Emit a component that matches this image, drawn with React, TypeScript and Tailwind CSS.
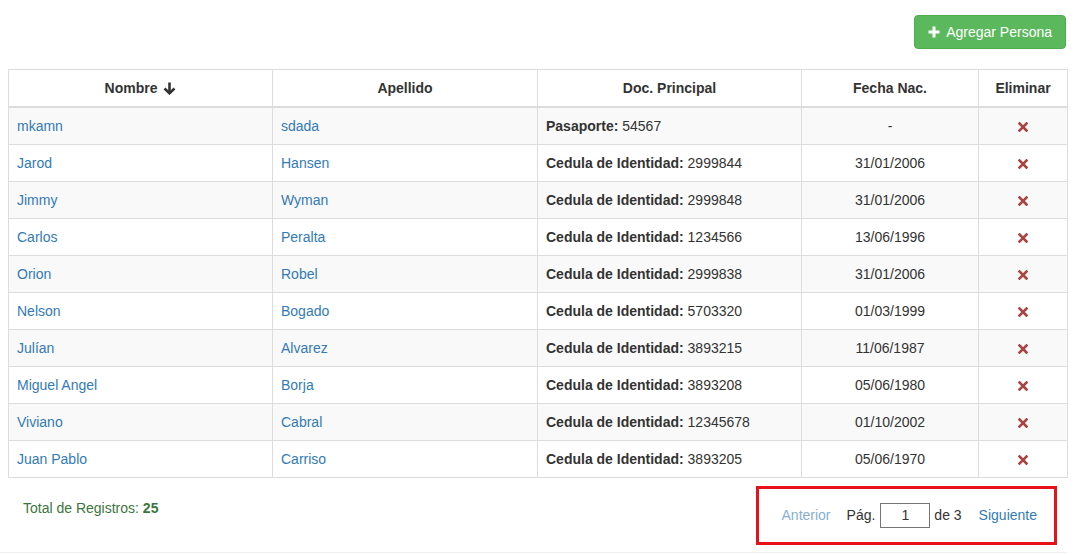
import React from "react";

const rows = [
  { nombre: "mkamn", apellido: "sdada", doc: "Pasaporte:", num: "54567", fecha: "-" },
  { nombre: "Jarod", apellido: "Hansen", doc: "Cedula de Identidad:", num: "2999844", fecha: "31/01/2006" },
  { nombre: "Jimmy", apellido: "Wyman", doc: "Cedula de Identidad:", num: "2999848", fecha: "31/01/2006" },
  { nombre: "Carlos", apellido: "Peralta", doc: "Cedula de Identidad:", num: "1234566", fecha: "13/06/1996" },
  { nombre: "Orion", apellido: "Robel", doc: "Cedula de Identidad:", num: "2999838", fecha: "31/01/2006" },
  { nombre: "Nelson", apellido: "Bogado", doc: "Cedula de Identidad:", num: "5703320", fecha: "01/03/1999" },
  { nombre: "Julían", apellido: "Alvarez", doc: "Cedula de Identidad:", num: "3893215", fecha: "11/06/1987" },
  { nombre: "Miguel Angel", apellido: "Borja", doc: "Cedula de Identidad:", num: "3893208", fecha: "05/06/1980" },
  { nombre: "Viviano", apellido: "Cabral", doc: "Cedula de Identidad:", num: "12345678", fecha: "01/10/2002" },
  { nombre: "Juan Pablo", apellido: "Carriso", doc: "Cedula de Identidad:", num: "3893205", fecha: "05/06/1970" },
];

function PlusIcon() {
  return (
    <svg width="12" height="12" viewBox="0 0 12 12" fill="#fff">
      <rect x="4.5" y="0.5" width="3" height="11" />
      <rect x="0.5" y="4.5" width="11" height="3" />
    </svg>
  );
}

function ArrowDownIcon() {
  return (
    <svg width="13" height="13" viewBox="0 0 13 13" fill="none" stroke="#333" strokeWidth="2.6" strokeLinecap="butt" strokeLinejoin="miter">
      <path d="M6.5 0.5 V11" />
      <path d="M1.5 6.5 L6.5 11.3 L11.5 6.5" />
    </svg>
  );
}

function RemoveIcon() {
  return (
    <svg width="10" height="10" viewBox="0 0 10 10" stroke="#a94442" strokeWidth="2.6" strokeLinecap="square">
      <path d="M1.5 1.5 L8.5 8.5 M8.5 1.5 L1.5 8.5" />
    </svg>
  );
}

export default function App() {
  return (
    <div className="w-[1079px] h-[555px] bg-white text-[14px] text-[#333] overflow-hidden" style={{ fontFamily: '"Liberation Sans", Arial, sans-serif' }}>
      <div className="w-[1067px] pl-2 pt-[15px]">
        <div className="flex justify-end">
          <button className="flex items-center gap-[6px] h-[34px] px-[13px] rounded-[4px] bg-[#5cb85c] border border-[#4cae4c] text-white text-[14px] leading-[20px] mr-px">
            <PlusIcon />
            Agregar Persona
          </button>
        </div>

        <table className="mt-5 w-[1059px] border-collapse border border-[#ddd] table-fixed">
          <colgroup>
            <col className="w-[264px]" />
            <col className="w-[265px]" />
            <col className="w-[264px]" />
            <col className="w-[177px]" />
            <col className="w-[89px]" />
          </colgroup>
          <thead>
            <tr>
              <th className="border border-[#ddd] border-b-2 p-2 leading-[20px] font-bold text-center">
                <span className="inline-flex items-center gap-[6px]">Nombre <ArrowDownIcon /></span>
              </th>
              <th className="border border-[#ddd] border-b-2 p-2 leading-[20px] font-bold text-center">Apellido</th>
              <th className="border border-[#ddd] border-b-2 p-2 leading-[20px] font-bold text-center">Doc. Principal</th>
              <th className="border border-[#ddd] border-b-2 p-2 leading-[20px] font-bold text-center">Fecha Nac.</th>
              <th className="border border-[#ddd] border-b-2 p-2 leading-[20px] font-bold text-center">Eliminar</th>
            </tr>
          </thead>
          <tbody>
            {rows.map((r, i) => (
              <tr key={i} className={i % 2 === 0 ? "bg-[#f9f9f9]" : "bg-white"}>
                <td className="border border-[#ddd] p-2 leading-[20px] text-[#337ab7]">{r.nombre}</td>
                <td className="border border-[#ddd] p-2 leading-[20px] text-[#337ab7]">{r.apellido}</td>
                <td className="border border-[#ddd] p-2 leading-[20px]">
                  <b>{r.doc}</b> {r.num}
                </td>
                <td className="border border-[#ddd] p-2 leading-[20px] text-center">{r.fecha}</td>
                <td className="border border-[#ddd] p-2 leading-[20px] text-center">
                  <span className="inline-flex align-middle"><RemoveIcon /></span>
                </td>
              </tr>
            ))}
          </tbody>
        </table>

        <div className="flex justify-between items-start mt-[8px]">
          <div className="pl-[15px] pt-[12px] leading-[20px] text-[#3c763d]">
            Total de Registros: <b className="text-[#3c763d]">25</b>
          </div>
          <div className="w-[301px] h-[59px] border-[3px] border-[#e8111b] flex items-center justify-end pr-[17px] mr-[10px]">
            <span className="text-[#337ab7] opacity-60 mr-4">Anterior</span>
            <span className="mr-[5px]">Pág.</span>
            <span className="w-[50px] h-[25px] border border-[#767676] flex items-center justify-center mr-[4px]">1</span>
            <span className="mr-[17px]">de 3</span>
            <span className="text-[#337ab7]">Siguiente</span>
          </div>
        </div>
      </div>
      <div className="mt-[7px] w-[1067px] border-t border-[#eee]" />
    </div>
  );
}
